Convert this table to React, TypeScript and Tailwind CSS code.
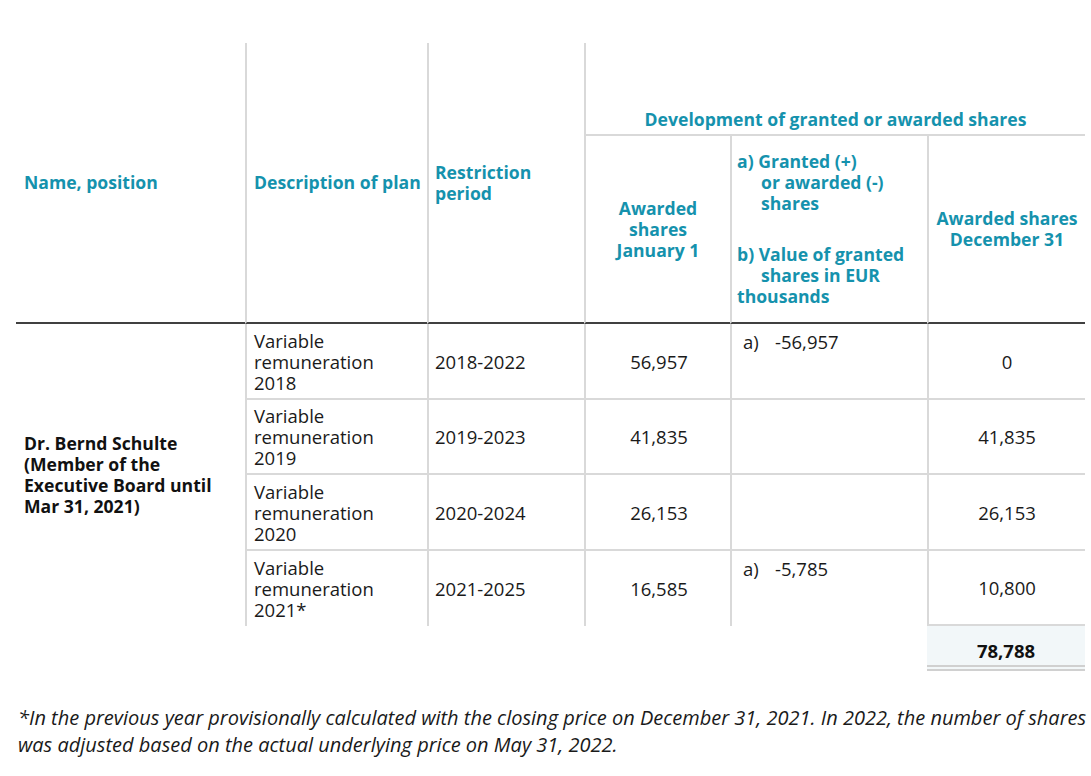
const rows = [
  { plan: "2018", period: "2018-2022", jan: "56,957", granted: "-56,957", dec: "0" },
  { plan: "2019", period: "2019-2023", jan: "41,835", granted: "", dec: "41,835" },
  { plan: "2020", period: "2020-2024", jan: "26,153", granted: "", dec: "26,153" },
  { plan: "2021*", period: "2021-2025", jan: "16,585", granted: "-5,785", dec: "10,800" },
];

const rowStart = ["row-start-3", "row-start-4", "row-start-5", "row-start-6"];

export default function App() {
  return (
    <div className="w-[1091px] h-[776px] bg-white overflow-hidden font-['Open_Sans',sans-serif] text-[#1a1a1a]">
      <div className="ml-[16px] pt-[43px] grid grid-cols-[229px_182px_157px_146px_197px_158px] grid-rows-[93px_188px_76px_75px_76px_75px_auto]">
        {/* Header */}
        <div className="col-start-1 row-start-1 row-span-2 flex items-center pl-[8px] border-b-2 border-b-[#404040] text-[17.6px] leading-[21px] font-bold text-[#1592ad]">
          Name, position
        </div>
        <div className="col-start-2 row-start-1 row-span-2 flex items-center pl-[7px] border-l-2 border-l-[#d9d9d9] border-b-2 border-b-[#404040] text-[17.6px] leading-[21px] font-bold text-[#1592ad] whitespace-nowrap">
          Description of plan
        </div>
        <div className="col-start-3 row-start-1 row-span-2 flex items-center pl-[6px] border-l-2 border-l-[#d9d9d9] border-b-2 border-b-[#404040] text-[17.6px] leading-[21px] font-bold text-[#1592ad]">
          <div>
            Restriction
            <br />
            period
          </div>
        </div>
        <div className="col-start-4 col-span-3 row-start-1 flex items-end justify-center pb-[4px] border-l-2 border-l-[#d9d9d9] border-b-2 border-b-[#d9d9d9] text-[17.6px] leading-[21px] font-bold text-[#1592ad] whitespace-nowrap">
          Development of granted or awarded shares
        </div>
        <div className="col-start-4 row-start-2 flex items-center justify-center text-center border-l-2 border-l-[#d9d9d9] border-b-2 border-b-[#404040] text-[17.6px] leading-[21px] font-bold text-[#1592ad]">
          <div>
            Awarded
            <br />
            shares
            <br />
            January 1
          </div>
        </div>
        <div className="col-start-5 row-start-2 flex flex-col justify-center pl-[5px] border-l-2 border-l-[#d9d9d9] border-b-2 border-b-[#404040] text-[17.6px] leading-[21px] font-bold text-[#1592ad] whitespace-nowrap">
          <div>a) Granted (+)</div>
          <div className="pl-[24px]">or awarded (-)</div>
          <div className="pl-[24px]">shares</div>
          <div className="mt-[30px]">b) Value of granted</div>
          <div className="pl-[24px]">shares in EUR</div>
          <div>thousands</div>
        </div>
        <div className="col-start-6 row-start-2 flex items-center justify-center text-center border-l-2 border-l-[#d9d9d9] border-b-2 border-b-[#404040] text-[17.6px] leading-[21px] font-bold text-[#1592ad] whitespace-nowrap">
          <div>
            Awarded shares
            <br />
            December 31
          </div>
        </div>

        {/* Name */}
        <div className="col-start-1 row-start-3 row-span-4 flex items-center pl-[8px] text-[17.6px] leading-[21px] font-bold text-[#111] whitespace-nowrap">
          <div>
            Dr. Bernd Schulte
            <br />
            (Member of the
            <br />
            Executive Board until
            <br />
            Mar 31, 2021)
          </div>
        </div>

        {rows.map((r, i) => {
          const last = i === rows.length - 1;
          const bb = last ? "" : "border-b-2 border-b-[#d9d9d9]";
          return [
            <div
              key={`p${i}`}
              className={`col-start-2 ${rowStart[i]} flex items-center pl-[7px] border-l-2 border-l-[#d9d9d9] ${bb} text-[18.5px] leading-[21px]`}
            >
              <div>
                Variable
                <br />
                remuneration
                <br />
                {r.plan}
              </div>
            </div>,
            <div
              key={`r${i}`}
              className={`col-start-3 ${rowStart[i]} flex items-center pl-[6px] border-l-2 border-l-[#d9d9d9] ${bb} text-[18.5px] leading-[21px]`}
            >
              {r.period}
            </div>,
            <div
              key={`j${i}`}
              className={`col-start-4 ${rowStart[i]} flex items-center justify-center pl-[2px] border-l-2 border-l-[#d9d9d9] ${bb} text-[18.5px] leading-[21px]`}
            >
              {r.jan}
            </div>,
            <div
              key={`g${i}`}
              className={`col-start-5 ${rowStart[i]} pt-[7px] pl-[11px] border-l-2 border-l-[#d9d9d9] ${bb} text-[18.5px] leading-[21px]`}
            >
              {r.granted && (
                <div className="flex">
                  <span className="w-[32px]">a)</span>
                  <span>{r.granted}</span>
                </div>
              )}
            </div>,
            <div
              key={`d${i}`}
              className={`col-start-6 ${rowStart[i]} flex items-center justify-center border-l-2 border-l-[#d9d9d9] border-b-2 border-b-[#d9d9d9] text-[18.5px] leading-[21px]`}
            >
              {r.dec}
            </div>,
          ];
        })}

        {/* Total */}
        <div className="col-start-6 row-start-7 h-[45px] bg-[#f2f7f9] border-b-[6px] border-double border-b-[#d0d0d0] flex items-end justify-center pb-[4px] text-[18.5px] leading-[21px] font-bold text-[#111]">
          78,788
        </div>
      </div>

      <div className="mt-[33px] pl-[18px] italic text-[20px] leading-[27px] text-[#1a1a1a] whitespace-nowrap">
        <div>
          *In the previous year provisionally calculated with the closing price on December 31, 2021. In 2022, the number of shares
        </div>
        <div>was adjusted based on the actual underlying price on May 31, 2022.</div>
      </div>
    </div>
  );
}
